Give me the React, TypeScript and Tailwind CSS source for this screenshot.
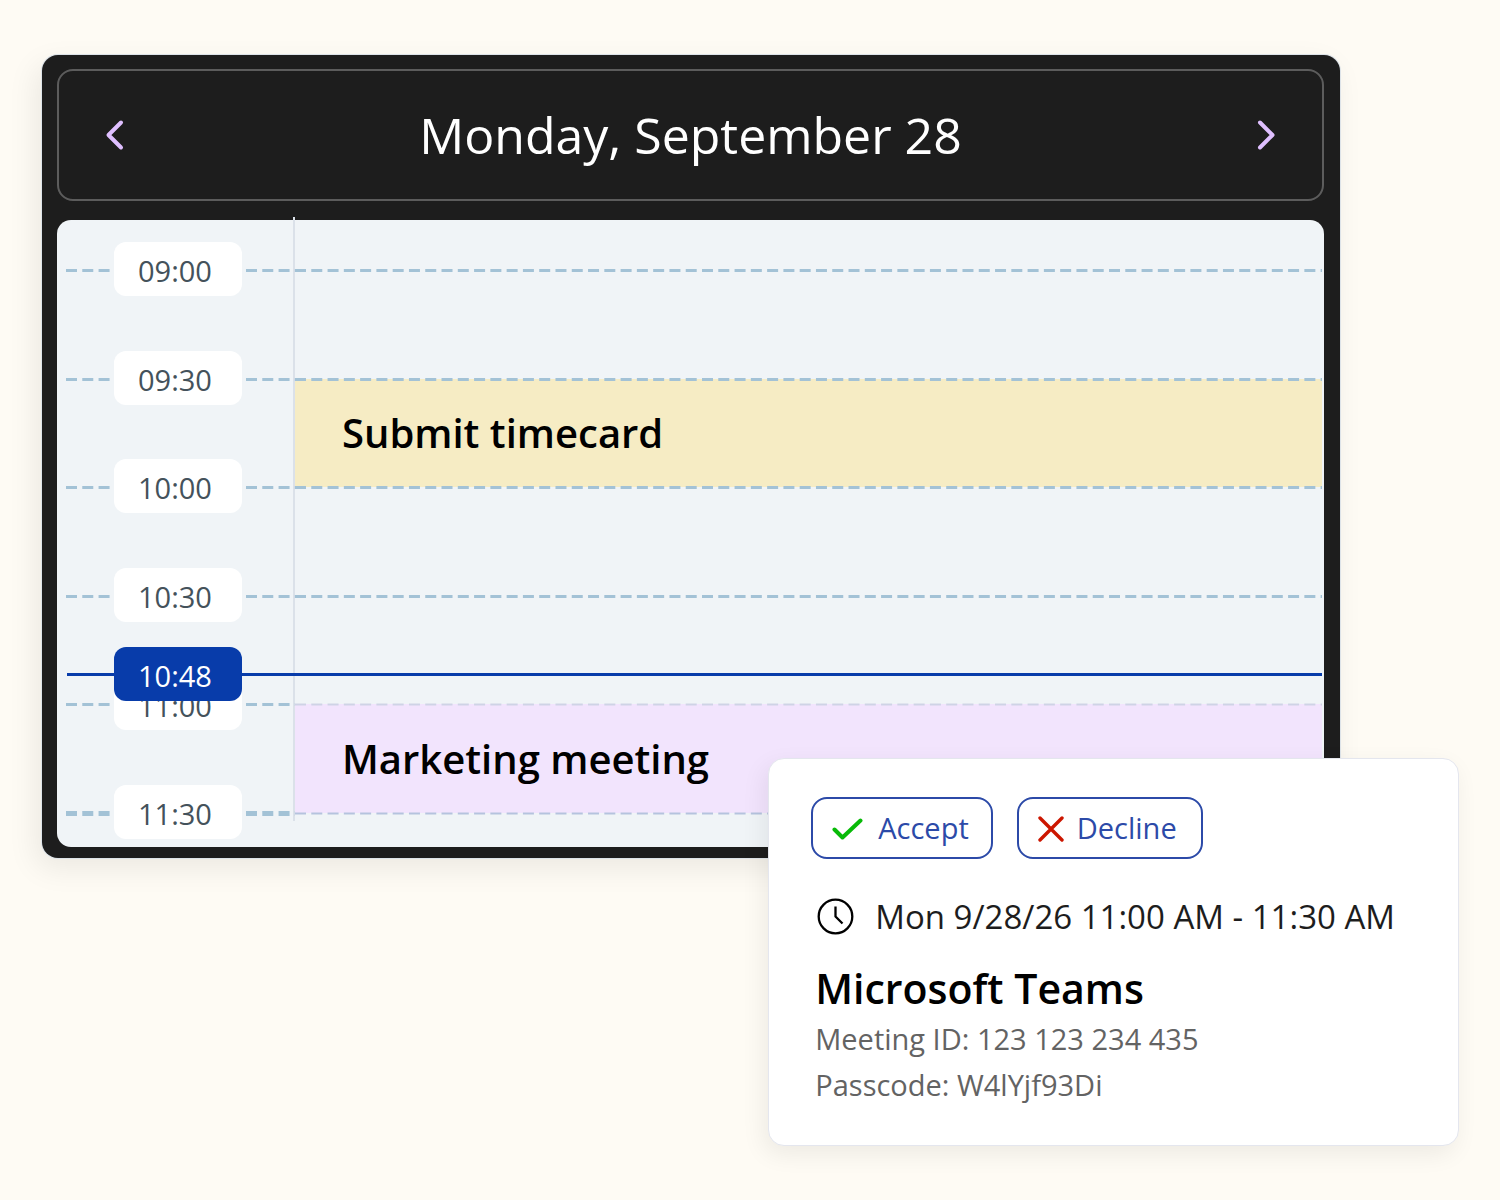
import React, { useState } from "react";
import clsx from "clsx";

interface Slot {
  time: string;
  // heavier dashes beside the pill
  thick?: boolean;
  // colour of the line right of the divider
  lineColor?: string;
}

interface CalendarEvent {
  title: string;
  start: number;
  end: number;
  className: string;
}

const SLOTS: Slot[] = [
  { time: "09:00" },
  { time: "09:30" },
  { time: "10:00" },
  { time: "10:30" },
  { time: "11:00", lineColor: "#cfd3e6" },
  { time: "11:30", thick: true, lineColor: "#b5c3de" },
];

// start and end are counted in slots from 09:00
const EVENTS: CalendarEvent[] = [
  { title: "Submit timecard", start: 1, end: 2, className: "bg-[#f6ecc4]" },
  { title: "Marketing meeting", start: 4, end: 5, className: "bg-[#f2e4fd]" },
];

const DAYS = ["Sunday, September 27", "Monday, September 28", "Tuesday, September 29"];

const Chevron: React.FC<{ direction: "left" | "right" }> = ({ direction }) => (
  <svg width="20" height="32" viewBox="0 0 20 32" fill="none" aria-hidden="true">
    <path
      d={direction === "left" ? "M16 3.5L3.5 16L16 28.5" : "M4 3.5L16.5 16L4 28.5"}
      stroke="#dfbfff"
      strokeWidth="4"
      strokeLinecap="round"
      strokeLinejoin="round"
    />
  </svg>
);

const DashedLine: React.FC<{
  className: string;
  color?: string;
  weight?: number;
}> = ({ className, color = "#a3c2d6", weight = 3 }) => (
  <svg className={clsx("h-2", className)} aria-hidden="true">
    <line
      x1="0"
      x2="100%"
      y1="5.5"
      y2="5.5"
      stroke={color}
      strokeWidth={weight}
      strokeDasharray="11 5.28"
    />
  </svg>
);

const TimePill: React.FC<{ time: string; current?: boolean }> = ({
  time,
  current,
}) => (
  <time
    className={clsx(
      "flex h-[54px] w-32 shrink-0 items-center rounded-xl pt-1 pl-6 text-[29px]",
      current ? "bg-[#083caa] text-white" : "bg-white text-[#44525b]"
    )}
  >
    {time}
  </time>
);

const DayGrid: React.FC = () => (
  <div className="relative mt-[19px] flex h-[627px] flex-col justify-between rounded-[14px] bg-[#f0f4f7] pt-[22px] pb-2">
    {/* events sit on the timeline between the first and the last hour line */}
    <div className="absolute top-[50px] right-[2px] bottom-[34px] left-[238px]">
      {EVENTS.map((event) => (
        <div
          key={event.title}
          className={clsx(
            "absolute inset-x-0 flex items-center pt-px pl-[47px] text-[40px] font-semibold text-black",
            event.className
          )}
          style={{
            top: `${(event.start / (SLOTS.length - 1)) * 100}%`,
            height: `${((event.end - event.start) / (SLOTS.length - 1)) * 100}%`,
          }}
        >
          {event.title}
        </div>
      ))}
    </div>

    <div className="absolute -top-[3px] bottom-[26px] left-[236px] w-[2px] bg-[#dbe1e9]" />

    {SLOTS.map((slot) => (
      <div key={slot.time} className="relative flex items-center pr-[2px] pl-[9px]">
        <DashedLine className="w-11" weight={slot.thick ? 5 : 3} />
        <div className="mx-1">
          <TimePill time={slot.time} />
        </div>
        <DashedLine className="w-[49px]" weight={slot.thick ? 5 : 3} />
        <DashedLine
          className="min-w-0 flex-1"
          color={slot.lineColor}
          weight={slot.lineColor ? 2 : 3}
        />
      </div>
    ))}

    <div className="absolute top-[427px] right-[2px] left-[10px] flex items-center">
      <div className="h-[3px] w-[47px] bg-[#083caa]" />
      <TimePill time="10:48" current />
      <div className="h-[3px] flex-1 bg-[#083caa]" />
    </div>
  </div>
);

const MeetingCard: React.FC = () => {
  const [response, setResponse] = useState<"accepted" | "declined" | null>(null);

  return (
    <section className="relative -mt-[100px] mr-[41px] ml-auto w-fit rounded-2xl border border-[#e4e6ee] bg-white pt-[38px] pr-[63px] pb-[37px] pl-[46px] shadow-[-4px_8px_24px_rgba(0,0,0,0.07)]">
      <div className="-ml-1 flex gap-6 text-[29px] text-[#2c4aa8]">
        <button
          type="button"
          aria-pressed={response === "accepted"}
          onClick={() => setResponse("accepted")}
          className="flex h-[62px] items-center gap-3.5 rounded-2xl border-2 border-[#2c4aa8] bg-white pr-[22px] pl-[19px]"
        >
          <svg width="32" height="24" viewBox="0 0 32 24" fill="none" aria-hidden="true">
            <path
              d="M2.5 13.5L10.5 21.5L28.5 4.5"
              stroke="#08ba08"
              strokeWidth="4"
              strokeLinecap="round"
              strokeLinejoin="round"
            />
          </svg>
          Accept
        </button>
        <button
          type="button"
          aria-pressed={response === "declined"}
          onClick={() => setResponse("declined")}
          className="flex h-[62px] items-center gap-3 rounded-2xl border-2 border-[#2c4aa8] bg-white pr-6 pl-[18px]"
        >
          <svg width="28" height="28" viewBox="0 0 28 28" fill="none" aria-hidden="true">
            <path
              d="M3 4L25 26M25 4L3 26"
              stroke="#cc1600"
              strokeWidth="3.4"
              strokeLinecap="round"
            />
          </svg>
          Decline
        </button>
      </div>

      <p className="mt-9 flex items-center gap-5 pl-[2px] text-[33px] leading-[44px] text-[#1d1d1d]">
        <svg width="38" height="38" viewBox="0 0 38 38" fill="none" aria-hidden="true">
          <circle cx="18.5" cy="18.5" r="16.8" stroke="#000" strokeWidth="2.3" />
          <path
            d="M18.5 8.5V18.5L25.5 25.5"
            stroke="#000"
            strokeWidth="2.3"
            strokeLinejoin="round"
          />
        </svg>
        Mon 9/28/26 11:00 AM - 11:30 AM
      </p>

      <h2 className="mt-[21px] text-[41px] leading-[56px] font-semibold text-black">
        Microsoft Teams
      </h2>
      <p className="text-[29px] leading-[46px] text-[#636363]">
        Meeting ID: 123 123 234 435
      </p>
      <p className="text-[29px] leading-[46px] text-[#636363]">
        Passcode: W4lYjf93Di
      </p>
    </section>
  );
};

const App: React.FC = () => {
  const [day, setDay] = useState(1);

  return (
    <main className="min-h-screen bg-[#fefbf4] pt-[55px] font-['Open_Sans',sans-serif]">
      <section className="mr-40 ml-[42px] rounded-2xl bg-[#1d1d1d] pt-3.5 pr-4 pb-[11px] pl-[15px] shadow-[0_0_0_1px_#dde3e8,-6px_10px_30px_rgba(0,0,0,0.08)]">
        <header className="flex h-[132px] items-center justify-between rounded-2xl border-2 border-[#5c5c5c] px-[46px]">
          <button
            type="button"
            aria-label="Previous day"
            onClick={() => setDay(Math.max(day - 1, 0))}
          >
            <Chevron direction="left" />
          </button>
          <h1 className="text-[50px] text-white">{DAYS[day]}</h1>
          <button
            type="button"
            aria-label="Next day"
            onClick={() => setDay(Math.min(day + 1, DAYS.length - 1))}
          >
            <Chevron direction="right" />
          </button>
        </header>
        <DayGrid />
      </section>

      <MeetingCard />
    </main>
  );
};

export default App;
